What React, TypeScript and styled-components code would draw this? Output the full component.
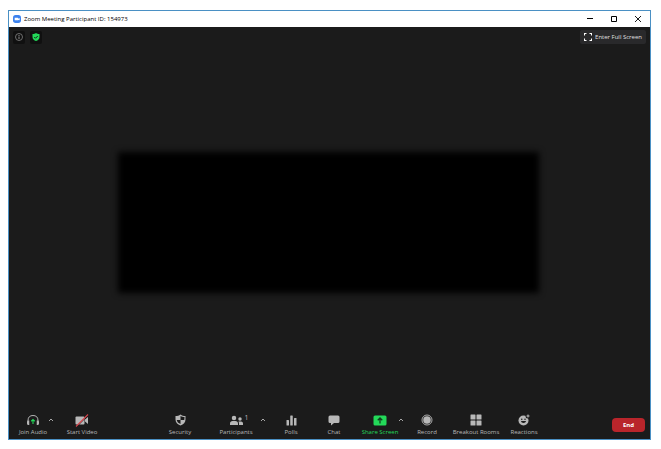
import React from "react";
import styled, { createGlobalStyle } from "styled-components";

const GlobalStyle = createGlobalStyle`
  * { box-sizing: border-box; }
  html, body, #root { height: 100%; margin: 0; }
  body { background: #fff; }
  button {
    margin: 0; padding: 0; border: 0; background: none; color: inherit;
    font: inherit; cursor: pointer; white-space: nowrap;
  }
  svg { display: block; }
`;

const Page = styled.div`
  height: 100vh;
  padding: 10px 10px 9px 8px;
  font-family: "Open Sans", "Noto Sans", sans-serif;
  font-size: 6px;
  line-height: 8px;
`;

const Window = styled.main`
  height: 100%;
  display: flex;
  flex-direction: column;
  border: 1px solid #4a90c4;
  background: #1b1b1b;
  color: #b8b8b8;
`;

const TitleBar = styled.header`
  height: 16px;
  flex: none;
  display: flex;
  align-items: center;
  gap: 3px;
  padding: 0 0 0 4px;
  background: #fff;
  color: #000;
`;

const Title = styled.h1`
  flex: 1;
  margin: 0;
  font: inherit;
`;

const WindowButton = styled.button`
  width: 24px;
  height: 14px;
  display: grid;
  place-items: center;
`;

const WindowButtons = styled.div`
  display: flex;
`;

const TopBar = styled.div`
  flex: none;
  display: flex;
  align-items: center;
  gap: 5px;
  padding: 3px 4px 0 4px;
`;

const BadgeButton = styled.button`
  width: 12px;
  height: 13px;
  display: grid;
  place-items: center;
  border-radius: 2px;
  background: #101010;
`;

const FullScreenButton = styled.button`
  height: 14px;
  display: flex;
  align-items: center;
  gap: 3px;
  margin-left: auto;
  padding: 0 4px;
  border-radius: 2px;
  background: #29292b;
  color: #e0e0e0;
`;

const Stage = styled.section`
  flex: 1;
  min-height: 0;
  display: flex;
  align-items: center;
  justify-content: center;
  padding: 0 2px 12px 0;
`;

const HiddenContent = styled.div`
  width: 66%;
  aspect-ratio: 3 / 1;
  background: #000;
  filter: blur(3px);
`;

const Toolbar = styled.footer`
  flex: none;
  display: flex;
  align-items: center;
  justify-content: space-between;
  padding: 0 5px 2px 1px;
`;

const ToolGroup = styled.div<{ $end?: number }>`
  display: flex;
  margin-right: ${(p) => p.$end ?? 0}px;
`;

const ToolSlot = styled.div<{ $width: number }>`
  width: ${(p) => p.$width}px;
  display: grid;
`;

const ToolButton = styled.button<{ $active?: boolean }>`
  grid-area: 1 / 1;
  display: flex;
  flex-direction: column;
  align-items: center;
  gap: 1px;
  padding-bottom: 1px;
  color: ${(p) => (p.$active ? "#23d959" : "#b8b8b8")};
`;

const IconRow = styled.span`
  position: relative;
  height: 14px;
  display: flex;
  align-items: center;
`;

const Count = styled.span`
  position: absolute;
  left: 100%;
  top: 1px;
  padding-left: 2px;
  font-size: 7px;
`;

const CaretButton = styled.button`
  grid-area: 1 / 1;
  justify-self: end;
  z-index: 1;
  width: 10px;
  height: 14px;
  display: grid;
  place-items: center;
  color: #a8a8a8;
`;

const EndButton = styled.button`
  width: 33px;
  height: 14px;
  border-radius: 4px;
  background: #b9252b;
  color: #fff;
  font-weight: 700;
`;

const Svg = ({ w, h = w, box, children }: { w: number; h?: number; box: string; children: React.ReactNode }) => (
  <svg width={w} height={h} viewBox={box} fill="currentColor" aria-hidden="true">{children}</svg>
);

const ZoomLogo = () => (
  <Svg w={8} box="0 0 24 24">
    <rect width="24" height="24" rx="8" fill="#3c82ee" />
    <path d="M5 8h9a2 2 0 0 1 2 2v6H7a2 2 0 0 1-2-2zM16 11l4-2v7l-4-2z" fill="#fff" />
  </Svg>
);
const HeadphonesIcon = () => (
  <Svg w={14} h={12} box="0 0 28 24">
    <path d="M4 16v-3C4 6 8 3 14 3s10 3 10 10v3" fill="none" stroke="#b4b4b4" strokeWidth="2" />
    <path d="M3 13h3.500v9H5a3 3 0 0 1-3-3v-3zM25 13h-3.500v9H23a3 3 0 0 0 3-3v-3z" />
    <path d="M14 20v-8M10.500 14.500 14 11l3.500 3.500" fill="none" stroke="#23d959" strokeWidth="2.200" />
  </Svg>
);
const VideoOffIcon = () => (
  <Svg w={14} h={13} box="0 0 28 26">
    <rect x="1" y="5" width="18" height="16" rx="2" />
    <path d="m20 11 6-5v14l-6-5z" />
    <path d="M3 26 27 2" stroke="#1b1b1b" strokeWidth="1.500" />
    <path d="M2 25 26 1" stroke="#d8444c" strokeWidth="2.200" />
  </Svg>
);
const ShieldIcon = () => (
  <Svg w={11} h={12} box="0 0 22 24">
    <path d="M11 1c3 2 6 3 10 3v7c0 6-4 10-10 12C5 21 1 17 1 11V4c4 0 7-1 10-3z" />
    <path d="M11 4v8h7.500c0 0 .5-3 .5-6-3 0-5-.500-8-2zM11 12v8c-4-1.500-7-4-7.500-8z" fill="#1b1b1b" />
  </Svg>
);
const PeopleIcon = () => (
  <Svg w={13} h={11} box="0 0 26 22">
    <circle cx="8" cy="6" r="4.500" />
    <path d="M0 20v-3c0-3 2-5 5-5h6c3 0 5 2 5 5v3z" />
    <circle cx="20" cy="8" r="3.500" />
    <path d="M18 20v-4l-1-3h5c3 0 4 2 4 4v3z" />
  </Svg>
);
const PollsIcon = () => (
  <Svg w={11} h={11} box="0 0 22 22">
    <rect x="1" y="10" width="5" height="11" rx="1" />
    <rect x="8.500" y="1" width="5" height="20" rx="1" />
    <rect x="16" y="6" width="5" height="15" rx="1" />
  </Svg>
);
const ChatIcon = () => (
  <Svg w={12} h={11} box="0 0 24 22">
    <path d="M4 1h16a3 3 0 0 1 3 3v9a3 3 0 0 1-3 3h-8l-6 5v-5H4a3 3 0 0 1-3-3V4a3 3 0 0 1 3-3z" />
  </Svg>
);
const ShareIcon = () => (
  <Svg w={14} h={11} box="0 0 28 22">
    <rect x="1" y="1" width="26" height="20" rx="3" />
    <path d="M14 17V6M9.500 10.500 14 6l4.500 4.500" fill="none" stroke="#123c1e" strokeWidth="2.500" />
  </Svg>
);
const RecordIcon = () => (
  <Svg w={12} box="0 0 24 24">
    <circle cx="12" cy="12" r="10" fill="none" stroke="currentColor" strokeWidth="1.800" />
    <circle cx="12" cy="12" r="7.500" />
  </Svg>
);
const RoomsIcon = () => (
  <Svg w={12} box="0 0 24 24">
    <rect x="1" y="1" width="10" height="10" rx="1" />
    <rect x="13" y="1" width="10" height="10" rx="1" />
    <rect x="1" y="13" width="10" height="10" rx="1" />
    <rect x="13" y="13" width="10" height="10" rx="1" />
  </Svg>
);
const ReactionIcon = () => (
  <Svg w={12} box="0 0 24 24">
    <circle cx="11" cy="13" r="10" />
    <circle cx="20" cy="4" r="5" fill="#1b1b1b" />
    <path d="M20 1v6M17 4h6" stroke="currentColor" strokeWidth="2" />
    <circle cx="7.500" cy="10.500" r="1.500" fill="#1b1b1b" />
    <circle cx="14" cy="10.500" r="1.500" fill="#1b1b1b" />
    <path d="M6 14h10c-.5 5-9.500 5-10 0z" fill="#1b1b1b" />
  </Svg>
);
const CaretIcon = () => (
  <Svg w={6} h={4} box="0 0 12 8">
    <path d="m2 6 4-4 4 4" fill="none" stroke="currentColor" strokeWidth="2" />
  </Svg>
);

type ToolProps = {
  label: string;
  width: number;
  icon: React.ReactNode;
  active?: boolean;
  count?: number;
  menu?: boolean;
};

const Tool = ({ label, width, icon, active, count, menu }: ToolProps) => (
  <ToolSlot $width={width}>
    <ToolButton type="button" $active={active}>
      <IconRow>
        {icon}
        {count !== undefined && <Count>{count}</Count>}
      </IconRow>
      {label}
    </ToolButton>
    {menu && (
      <CaretButton type="button" aria-label={`${label} options`}>
        <CaretIcon />
      </CaretButton>
    )}
  </ToolSlot>
);

export default function App() {
  return (
    <Page>
      <GlobalStyle />
      <Window>
        <TitleBar>
          <ZoomLogo />
          <Title>Zoom Meeting Participant ID: 154973</Title>
          <WindowButtons>
            <WindowButton type="button" aria-label="Minimize">
              <Svg w={6} box="0 0 6 6"><path d="M0 2h6v1H0z" /></Svg>
            </WindowButton>
            <WindowButton type="button" aria-label="Maximize">
              <Svg w={6} box="0 0 6 6"><path d="M.5.5h5v5h-5z" fill="none" stroke="currentColor" /></Svg>
            </WindowButton>
            <WindowButton type="button" aria-label="Close">
              <Svg w={6} box="0 0 6 6"><path d="m0 0 6 6M6 0 0 6" fill="none" stroke="currentColor" strokeWidth=".9" /></Svg>
            </WindowButton>
          </WindowButtons>
        </TitleBar>

        <TopBar>
          <BadgeButton type="button" aria-label="Meeting information">
            <Svg w={8} box="0 0 16 16">
              <circle cx="8" cy="8" r="7" fill="none" stroke="#8c8c8c" strokeWidth="1.500" />
              <path d="M7 7h2v5H7zM7 4h2v2H7z" fill="#8c8c8c" />
            </Svg>
          </BadgeButton>
          <BadgeButton type="button" aria-label="Encryption">
            <Svg w={8} box="0 0 16 16">
              <path d="M8 0c2 1.500 4 2 7 2v6c0 4-3 7-7 8-4-1-7-4-7-8V2c3 0 5-.500 7-2z" fill="#23d959" />
              <path d="m4.500 8 2.500 2.500L11.500 6" fill="none" stroke="#101010" strokeWidth="1.800" />
            </Svg>
          </BadgeButton>
          <FullScreenButton type="button">
            <Svg w={8} box="0 0 16 16">
              <path d="M1 5V1h4M11 1h4v4M15 11v4h-4M5 15H1v-4" fill="none" stroke="#fff" strokeWidth="2.200" />
            </Svg>
            Enter Full Screen
          </FullScreenButton>
        </TopBar>

        <Stage>
          <HiddenContent />
        </Stage>

        <Toolbar>
          <ToolGroup>
            <Tool label="Join Audio" width={46} icon={<HeadphonesIcon />} menu />
            <Tool label="Start Video" width={52} icon={<VideoOffIcon />} />
          </ToolGroup>
          <ToolGroup $end={20}>
            <Tool label="Security" width={48} icon={<ShieldIcon />} />
            <Tool label="Participants" width={64} icon={<PeopleIcon />} count={1} menu />
            <Tool label="Polls" width={46} icon={<PollsIcon />} />
            <Tool label="Chat" width={40} icon={<ChatIcon />} />
            <Tool label="Share Screen" width={52} icon={<ShareIcon />} active menu />
            <Tool label="Record" width={42} icon={<RecordIcon />} />
            <Tool label="Breakout Rooms" width={56} icon={<RoomsIcon />} />
            <Tool label="Reactions" width={40} icon={<ReactionIcon />} />
          </ToolGroup>
          <EndButton type="button">End</EndButton>
        </Toolbar>
      </Window>
    </Page>
  );
}
